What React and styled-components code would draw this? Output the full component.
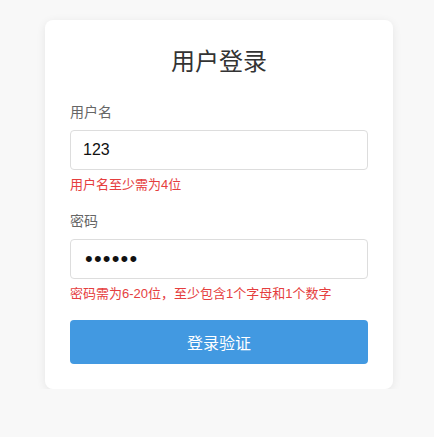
import React from 'react'
import styled, { createGlobalStyle } from 'styled-components'

const GlobalStyle = createGlobalStyle`
  body {
    margin: 0;
    background: #f8f8f8;
    font-family: "Liberation Sans", Arial, "Noto Sans CJK SC", sans-serif;
  }
`;

const Page = styled.div`
  padding: 20px 0 0 4px;
  display: flex;
  justify-content: center;
`;

const Card = styled.form`
  width: 348px;
  box-sizing: border-box;
  padding: 25px;
  background: #fff;
  border-radius: 8px;
  box-shadow: 0 2px 10px rgba(0, 0, 0, 0.08);
`;

const Title = styled.h2`
  margin: 0 0 23px;
  font-size: 24px;
  line-height: 34px;
  font-weight: normal;
  color: #333;
  text-align: center;
`;

const Group = styled.div`
  margin-bottom: 16px;
`;

const Label = styled.label`
  display: block;
  font-size: 14px;
  line-height: 20px;
  color: #666;
  margin-bottom: 8px;
`;

const Input = styled.input`
  display: block;
  width: 100%;
  height: 40px;
  box-sizing: border-box;
  padding: 0 ${p => p.$secret ? '12px 0 14px' : '12px'};
  border: 1px solid #ddd;
  border-radius: 4px;
  font-size: ${p => p.$secret ? '22px' : '16px'};
  font-family: "Liberation Sans", Arial, sans-serif;
  letter-spacing: ${p => p.$secret ? '1.2px' : 'normal'};
  color: #111;
  outline: none;
`;

const Error = styled.div`
  margin-top: 5px;
  font-size: 13px;
  line-height: 20px;
  color: #e53e3e;
`;

const Submit = styled.button`
  display: block;
  width: 100%;
  height: 44px;
  margin-top: 1px;
  border: none;
  border-radius: 4px;
  background: #4299e1;
  color: #fff;
  font-size: 16px;
  font-family: inherit;
  cursor: pointer;
`;

const App = () => {
    return (
        <>
            <GlobalStyle />
            <Page>
                <Card onSubmit={e => e.preventDefault()}>
                    <Title>用户登录</Title>
                    <Group>
                        <Label>用户名</Label>
                        <Input type="text" defaultValue="123" />
                        <Error>用户名至少需为4位</Error>
                    </Group>
                    <Group>
                        <Label>密码</Label>
                        <Input $secret type="password" defaultValue="123456" />
                        <Error>密码需为6-20位，至少包含1个字母和1个数字</Error>
                    </Group>
                    <Submit type="submit">登录验证</Submit>
                </Card>
            </Page>
        </>
    )
};

export default App
